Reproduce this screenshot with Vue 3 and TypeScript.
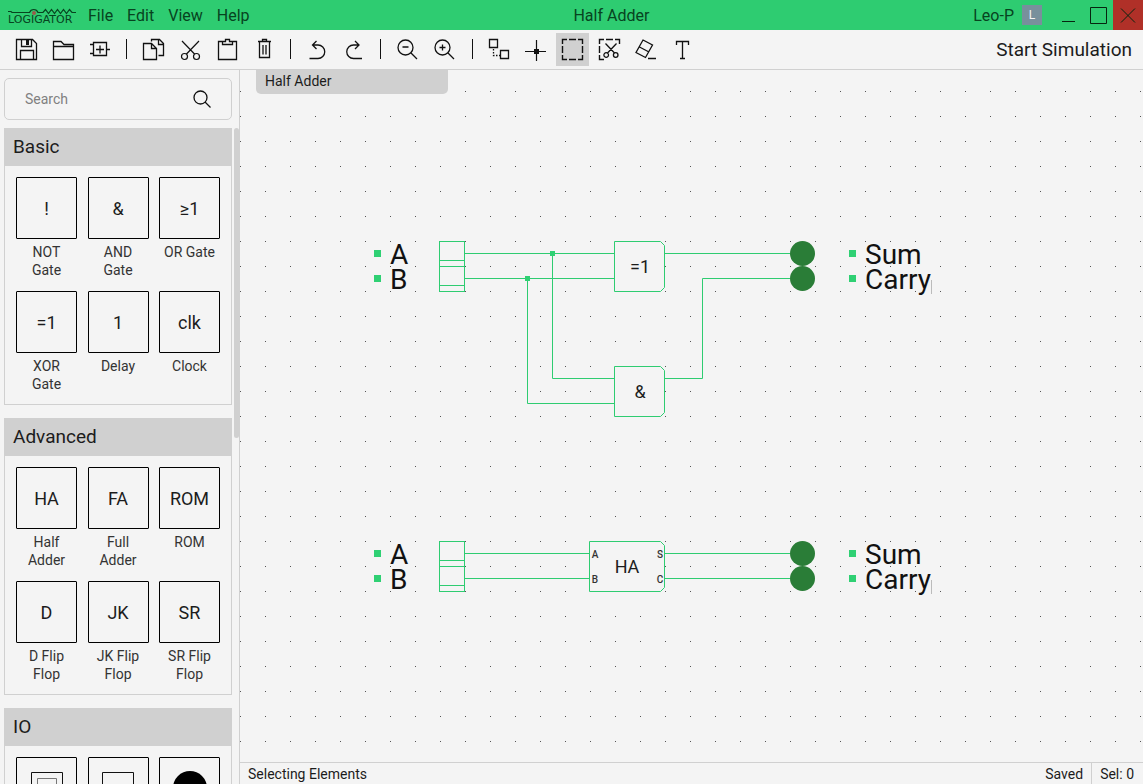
<script setup lang="ts">
import { ref } from 'vue'

interface Shape {
  d: string
  fill?: boolean
  dash?: string
  width?: number
}
interface Tool {
  name: string
  shapes: Shape[]
}
interface Part {
  symbol?: string
  label: string
  glyph?: 'button' | 'lever' | 'led'
}
interface Group {
  title: string
  parts: Part[]
}

const menus: string[] = ['File', 'Edit', 'View', 'Help']

const magnifier = 'M22 14.5a7.5 7.5 0 1 1-15 0a7.5 7.5 0 1 1 15 0M20 20L26 26'

const toolGroups: Tool[][] = [
  [
    {
      name: 'Save',
      shapes: [
        { d: 'M6.5 6.5H22.5L26.5 10.5V26.5H6.5Z M11.5 6.5V13.5H21.5V6.5 M10.5 26.5V17.5H23.5V26.5' },
        { d: 'M16 7H19V12H16Z', fill: true }
      ]
    },
    { name: 'Open', shapes: [{ d: 'M6.5 26.5V8.5H14L17 11.5H26.5V26.5Z M6.5 13.5H26.5' }] },
    {
      name: 'New component',
      shapes: [{ d: 'M9.5 9.5H22.5V22.5H9.5Z M6 11.5H9.5 M6 20.5H9.5 M22.5 16.5H26 M12 16.5H20 M16 12.5V20.5' }]
    }
  ],
  [
    {
      name: 'Copy',
      shapes: [
        { d: 'M6.5 10.5H14.5L19.5 15.5V26.5H6.5Z M14.5 10.5V15.5H19.5 M14.5 8.5V6.5H22.5L26.5 10.5V22.5H21.5 M21.5 6.5V11.5H26.5' }
      ]
    },
    {
      name: 'Cut',
      shapes: [
        { d: 'M8 8L21 21.5 M25 8L12 21.5 M13.5 23.5a3 3 0 1 1-6 0a3 3 0 1 1 6 0 M25.5 23.5a3 3 0 1 1-6 0a3 3 0 1 1 6 0', width: 1.2 }
      ]
    },
    { name: 'Paste', shapes: [{ d: 'M12 8.5H7.5V26.5H25.5V8.5H21.5 M11.5 11.5V8.5H14.5V6.5H18.5V8.5H21.5V11.5Z' }] },
    {
      name: 'Delete',
      shapes: [{ d: 'M10 8.5H23 M14.5 8.5V6.5H18.5V8.5 M11.5 9V24.5H21.5V9 M15 12V21.5 M18 12V21.5' }]
    }
  ],
  [
    { name: 'Undo', shapes: [{ d: 'M15.5 8L11.5 12L15.5 16 M11.5 12H17A6.7 6.7 0 0 1 17 25.5H8.5' }] },
    { name: 'Redo', shapes: [{ d: 'M17 8L21 12L17 16 M21 12H15.5A6.7 6.7 0 0 0 15.5 25.5H24' }] }
  ],
  [
    { name: 'Zoom out', shapes: [{ d: magnifier + 'M11.5 14H17.5' }] },
    { name: 'Zoom in', shapes: [{ d: magnifier + 'M11.5 14.5H17.5M14.5 11.5V17.5' }] }
  ],
  [
    {
      name: 'Connect wires',
      shapes: [
        { d: 'M6.5 6.5H14.5V14.5H6.5Z M17.5 17.5H25.5V25.5H17.5Z' },
        { d: 'M10.5 16V22.5H17', dash: '1.5 1.5' }
      ]
    },
    {
      name: 'Toggle connection',
      shapes: [{ d: 'M6 18.5H27 M17.5 7V28', width: 1.2 }, { d: 'M15 16H20V21H15Z', fill: true }]
    },
    {
      name: 'Select',
      shapes: [
        { d: 'M6.5 11V6.5H11 M22 6.5H26.5V11 M26.5 22V26.5H22 M11 26.5H6.5V22 M13 6.5H20 M26.5 13V20 M20 26.5H13 M6.5 20V13', width: 1.4 }
      ]
    },
    {
      name: 'Select cutting',
      shapes: [
        { d: 'M6.5 11V6.5H11 M22 6.5H26.5V11 M11 26.5H6.5V22 M13 6.5H20 M6.5 20V13', width: 1.4 },
        { d: 'M12.5 10.5L21.5 20 M23.5 10.5L14.5 20 M15.5 22a2.3 2.3 0 1 1-4.6 0a2.3 2.3 0 1 1 4.6 0 M25 22a2.3 2.3 0 1 1-4.6 0a2.3 2.3 0 1 1 4.6 0' }
      ]
    },
    { name: 'Erase', shapes: [{ d: 'M14 7L23.5 12L16.5 24.5L7 19.5Z M10.5 14L20 19 M19 25.5H27' }] },
    { name: 'Text', shapes: [{ d: 'M10.5 12V8.5H22.5V12 M16.5 8.5V25.5 M14 25.5H19' }] }
  ]
]

const activeTool = ref<string>('Select')
const search = ref<string>('')

const groups: Group[] = [
  {
    title: 'Basic',
    parts: [
      { symbol: '!', label: 'NOT Gate' },
      { symbol: '&', label: 'AND Gate' },
      { symbol: '≥1', label: 'OR Gate' },
      { symbol: '=1', label: 'XOR Gate' },
      { symbol: '1', label: 'Delay' },
      { symbol: 'clk', label: 'Clock' }
    ]
  },
  {
    title: 'Advanced',
    parts: [
      { symbol: 'HA', label: 'Half Adder' },
      { symbol: 'FA', label: 'Full Adder' },
      { symbol: 'ROM', label: 'ROM' },
      { symbol: 'D', label: 'D Flip Flop' },
      { symbol: 'JK', label: 'JK Flip Flop' },
      { symbol: 'SR', label: 'SR Flip Flop' }
    ]
  },
  {
    title: 'IO',
    parts: [
      { glyph: 'button', label: 'Button' },
      { glyph: 'lever', label: 'Lever' },
      { glyph: 'led', label: 'LED' }
    ]
  }
]

// Both circuits share their inputs, lamps and labels; only the vertical origin differs.
const circuitTops: number[] = [171, 471]
const rows: { input: string; output: string; dy: number }[] = [
  { input: 'A', output: 'Sum', dy: 0 },
  { input: 'B', output: 'Carry', dy: 25 }
]
</script>

<template>
  <div class="app">
    <header class="titlebar">
      <svg class="logo" width="72" height="20" viewBox="0 0 72 20" role="img" aria-label="Logigator">
        <path class="logo-line" d="M0 4.5H3L4 5.5H21.5A4.5 4.5 0 0 1 30 5.5H35L37.5 2.5L40.5 6.5L43.5 2.5L46.5 6.5L49.5 2.5L52.5 6.5L55.5 2.5L58.5 6.5L61.5 2.5L64 5.5H68" />
        <circle class="logo-dot" cx="26" cy="6" r="2" />
        <text class="logo-text" x="0" y="16">LOGIGATOR</text>
      </svg>
      <nav class="menu">
        <button v-for="m in menus" :key="m" type="button">{{ m }}</button>
      </nav>
      <h1 class="title">Half Adder</h1>
      <button class="user" type="button">Leo-P <span class="avatar">L</span></button>
      <div class="window-buttons">
        <button type="button" aria-label="Minimize">
          <svg width="30" height="30"><path d="M9 21.5H22" /></svg>
        </button>
        <button type="button" aria-label="Maximize">
          <svg width="30" height="30"><path d="M7.5 7.5H23.5V23.5H7.5Z" /></svg>
        </button>
        <button class="close" type="button" aria-label="Close">
          <svg width="30" height="30"><path d="M8 8.5L22 22.5M22 8.5L8 22.5" /></svg>
        </button>
      </div>
    </header>

    <div class="toolbar" role="toolbar" aria-label="Tools">
      <div v-for="(tools, gi) in toolGroups" :key="gi" class="tool-group" :class="{ modes: gi === 4 }">
        <button
          v-for="t in tools"
          :key="t.name"
          type="button"
          class="tool"
          :class="{ active: t.name === activeTool }"
          :aria-label="t.name"
          @click="activeTool = gi === 4 ? t.name : activeTool"
        >
          <svg width="33" height="33" viewBox="0 0 33 33">
            <path
              v-for="(s, si) in t.shapes"
              :key="si"
              :d="s.d"
              :class="{ solid: s.fill }"
              :stroke-dasharray="s.dash"
              :stroke-width="s.width ?? 1.3"
            />
          </svg>
        </button>
      </div>
      <button class="start" type="button">Start Simulation</button>
    </div>

    <div class="main">
      <aside class="sidebar">
        <label class="search">
          <input v-model="search" type="text" placeholder="Search" aria-label="Search" />
          <svg width="20" height="20" viewBox="0 0 20 20"><circle cx="8.5" cy="8.5" r="6.5" /><path d="M13 13L18.5 18.5" /></svg>
        </label>
        <div class="palette">
          <div class="groups">
            <section v-for="g in groups" :key="g.title" class="group">
              <h2>{{ g.title }}</h2>
              <div class="parts">
                <button v-for="p in g.parts" :key="p.label" type="button" class="part">
                  <span class="symbol">
                    <template v-if="p.symbol">{{ p.symbol }}</template>
                    <svg v-else width="34" height="34" viewBox="0 0 34 34">
                      <path v-if="p.glyph !== 'led'" d="M1.5 1.5H32.5V32.5H1.5Z" />
                      <path v-if="p.glyph === 'button'" class="inner" d="M7.5 7.5H26.5V26.5H7.5Z" />
                      <path v-if="p.glyph === 'lever'" d="M1.5 24.5H32.5" />
                      <circle v-if="p.glyph === 'led'" cx="17" cy="17" r="17" />
                    </svg>
                  </span>
                  <span class="part-label">{{ p.label }}</span>
                </button>
              </div>
            </section>
          </div>
          <div class="thumb"></div>
        </div>
      </aside>

      <div class="workspace">
        <div class="canvas">
          <svg class="board" width="100%" height="100%">
            <defs>
              <pattern id="grid" width="25" height="25" y="21" patternUnits="userSpaceOnUse">
                <rect width="1" height="1" class="grid-dot" />
              </pattern>
            </defs>
            <rect width="100%" height="100%" fill="url(#grid)" />

            <g v-for="top in circuitTops" :key="top" :transform="`translate(0 ${top})`">
              <g v-for="r in rows" :key="r.input" :transform="`translate(0 ${r.dy})`">
                <rect class="anchor" x="134" y="9" width="7" height="7" />
                <text class="caption" x="150" y="23">{{ r.input }}</text>
                <rect class="body" x="199.5" y="0.5" width="25" height="25" />
                <path class="wire" d="M199.5 19.5H224.5" />
                <rect class="anchor" x="609" y="9" width="7" height="7" />
                <text class="caption" x="625" y="23">{{ r.output }}</text>
              </g>
              <path class="caret" d="M691.5 39V53" />
            </g>

            <path class="wire" d="M225 183.5H374M225 208.5H374M312.5 183.5V308.5H374M287.5 208.5V333.5H374" />
            <path class="wire" d="M425 183.5H550M425 308.5H462.5V208.5H550" />
            <path class="wire" d="M225 483.5H349M225 508.5H349M425 483.5H550M425 508.5H550" />
            <rect class="anchor" x="310" y="181" width="5" height="5" />
            <rect class="anchor" x="285" y="206" width="5" height="5" />

            <path class="body" d="M374.5 171.5H420.5L424.5 175.5V217.5L420.5 221.5H374.5Z" />
            <path class="body" d="M374.5 296.5H420.5L424.5 300.5V342.5L420.5 346.5H374.5Z" />
            <path class="body" d="M349.5 471.5H420.5L424.5 475.5V517.5L420.5 521.5H349.5Z" />
            <text class="gate" x="400" y="203">=1</text>
            <text class="gate" x="400" y="328">&amp;</text>
            <text class="gate" x="387" y="503">HA</text>
            <text class="pin" x="355" y="488">A</text>
            <text class="pin" x="355" y="513">B</text>
            <text class="pin" x="420" y="488">S</text>
            <text class="pin" x="420" y="513">C</text>

            <g v-for="top in circuitTops" :key="top">
              <circle v-for="r in rows" :key="r.output" class="lamp" cx="562.5" :cy="top + r.dy + 12.5" r="12.5" />
            </g>
          </svg>
          <div class="tab">Half Adder</div>
        </div>
        <footer class="statusbar">
          <span class="mode">Selecting Elements</span>
          <span class="saved">Saved</span>
          <span class="selection">Sel: 0</span>
        </footer>
      </div>
    </div>
  </div>
</template>

<style>
html,
body {
  margin: 0;
  background: #f4f4f4;
}
</style>

<style scoped>
.app {
  display: flex;
  flex-direction: column;
  height: 100vh;
  overflow: hidden;
  background: #f4f4f4;
  color: #1c1c1c;
  font-family: Roboto, "Noto Sans", sans-serif;
  font-size: 14px;
}
* {
  box-sizing: border-box;
}
button {
  margin: 0;
  padding: 0;
  border: 0;
  background: none;
  color: inherit;
  font: inherit;
}
svg {
  display: block;
  fill: none;
}

.titlebar {
  display: flex;
  align-items: center;
  flex: none;
  height: 30px;
  background: #2ecc71;
  color: #07431f;
  font-size: 16px;
}
.logo {
  flex: none;
  margin: 4px 0 0 8px;
  overflow: visible;
}
.logo-line {
  stroke: #07431f;
  stroke-width: 1.2;
}
.logo-dot {
  fill: #9a5a4a;
}
.logo-text {
  fill: #07431f;
  font-family: "DejaVu Sans", sans-serif;
  font-size: 11px;
}
.menu {
  display: flex;
  gap: 14px;
  padding-left: 8px;
}
.title {
  flex: 1;
  margin: 0;
  font-size: 16px;
  font-weight: 400;
  text-align: center;
}
.user {
  display: flex;
  align-items: center;
  gap: 8px;
  margin-right: 11px;
}
.avatar {
  width: 20px;
  height: 20px;
  background: #78909c;
  color: #f4f4f4;
  font-size: 12px;
  line-height: 20px;
  text-align: center;
}
.window-buttons {
  display: flex;
}
.window-buttons path {
  stroke: #06250f;
  stroke-width: 1;
}
.close {
  background: #b03028;
}

.toolbar {
  display: flex;
  align-items: center;
  flex: none;
  height: 40px;
  padding: 0 11px 0 10px;
  border-bottom: 1px solid #d0d0d0;
}
.tool-group {
  display: flex;
  gap: 4px;
}
.tool-group + .tool-group::before {
  content: "";
  width: 1px;
  height: 20px;
  margin: 6px 6px 0 9px;
  background: #111;
}
.tool-group.modes {
  justify-content: space-between;
  gap: 0;
  width: 238px;
}
.tool-group.tool-group.modes::before {
  margin-left: 11px;
}
.tool {
  width: 33px;
  height: 33px;
}
.tool.active {
  background: #d0d0d0;
}
.tool path {
  stroke: #111;
}
.tool path.solid {
  fill: #111;
  stroke: none;
}
.start {
  margin-left: auto;
  font-size: 19px;
}

.main {
  display: flex;
  flex: 1;
  min-height: 0;
}
.sidebar {
  display: flex;
  flex-direction: column;
  flex: none;
  width: 240px;
  border-right: 1px solid #d0d0d0;
}
.search {
  display: flex;
  align-items: center;
  flex: none;
  height: 42px;
  margin: 8px 7px 8px 4px;
  padding: 0 19px 0 20px;
  border: 1px solid #d0d0d0;
  border-radius: 5px;
}
.search input {
  flex: 1;
  min-width: 0;
  padding: 0;
  border: 0;
  outline: 0;
  background: none;
  color: #1c1c1c;
  font: inherit;
}
.search input::placeholder {
  color: #808080;
  opacity: 1;
}
.search svg {
  stroke: #111;
  stroke-width: 1.3;
}
.palette {
  display: flex;
  flex: 1;
  align-items: flex-start;
  min-height: 0;
  overflow: hidden;
}
.groups {
  flex: 1;
  padding-left: 4px;
}
.thumb {
  flex: none;
  width: 5px;
  height: 310px;
  margin-left: 2px;
  border-radius: 3px;
  background: #d0d0d0;
}
.group {
  margin-bottom: 13px;
  border: 1px solid #d0d0d0;
  border-top: 0;
}
.group h2 {
  height: 38px;
  margin: 0;
  padding-left: 8px;
  background: #d0d0d0;
  font-size: 19px;
  font-weight: 400;
  line-height: 37px;
}
.parts {
  display: grid;
  grid-template-columns: repeat(3, 61px);
  justify-content: space-between;
  row-gap: 12px;
  padding: 11px;
}
.part {
  display: flex;
  flex-direction: column;
  gap: 4px;
  min-height: 102px;
}
.symbol {
  display: flex;
  align-items: center;
  justify-content: center;
  width: 61px;
  height: 62px;
  border: 1px solid #000;
  border-radius: 1px;
  font-size: 18px;
}
.symbol path {
  stroke: #111;
}
.symbol path.inner {
  stroke: #777;
}
.symbol circle {
  fill: #000;
}
.part-label {
  width: 61px;
  padding: 0 3px;
  color: #333;
  line-height: 18px;
  text-align: center;
}

.workspace {
  display: flex;
  flex: 1;
  flex-direction: column;
  min-width: 0;
}
.canvas {
  position: relative;
  flex: 1;
  min-height: 0;
  overflow: hidden;
}
.board {
  position: absolute;
  inset: 0;
}
.grid-dot {
  fill: #555;
}
.tab {
  position: absolute;
  top: 0;
  left: 16px;
  width: 192px;
  height: 24px;
  padding-left: 9px;
  border-radius: 0 0 5px 5px;
  background: #d0d0d0;
  line-height: 22px;
}
.wire {
  stroke: #2ecc71;
}
.body {
  fill: #f4f4f4;
  stroke: #2ecc71;
}
.anchor {
  fill: #2fd073;
}
.lamp {
  fill: #2a7d37;
}
.caption {
  fill: #111;
  font-size: 28px;
}
.caret {
  stroke: #bbb;
}
.gate {
  fill: #1c1c1c;
  font-size: 18px;
  text-anchor: middle;
}
.pin {
  fill: #333;
  font-size: 10px;
  font-weight: 500;
  text-anchor: middle;
}
.statusbar {
  display: flex;
  flex: none;
  height: 22px;
  border-top: 1px solid #d0d0d0;
  line-height: 22px;
}
.mode {
  flex: 1;
  padding-left: 8px;
}
.saved {
  padding-right: 8px;
}
.selection {
  padding: 0 9px 0 8px;
  border-left: 1px solid #d0d0d0;
}
</style>
